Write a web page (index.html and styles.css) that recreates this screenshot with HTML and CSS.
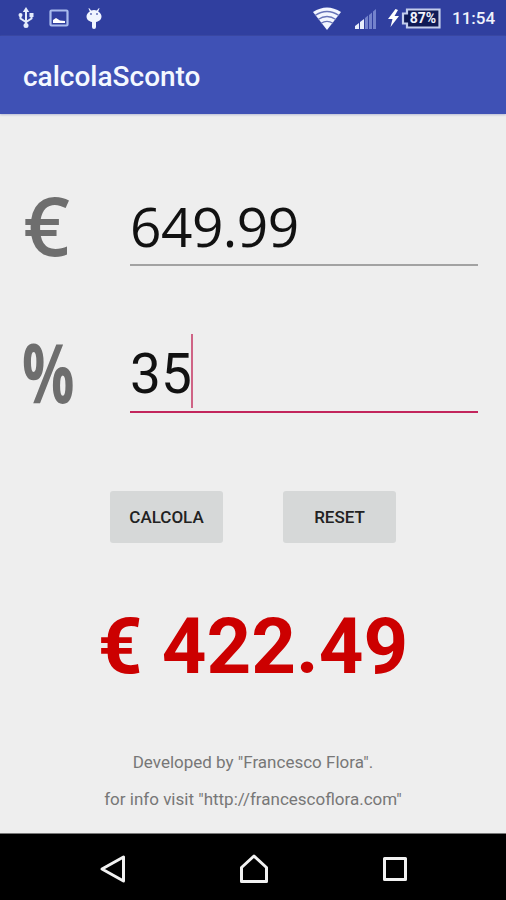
FILE: index.html
```
<!DOCTYPE html>
<html lang="it">
    <head>
        <meta charset="utf-8">
        <meta name="viewport" content="width=device-width, initial-scale=1.0">
        <title>calcolaSconto</title>
        <link rel="stylesheet" href="styles.css">
    </head>
    <body>
        <div class="statusbar">
            <svg class="usb" width="18" height="24" viewBox="0 0 18 24">
                <path d="M9 5v14M3.500 8.500v4l5.500 3.500 5.500-3.500v-4" />
                <path class="fill" d="M9 1l3.200 5H5.800zM12.500 7h4v4h-4z" />
                <circle cx="3.500" cy="9" r="2" />
                <circle cx="9" cy="19.500" r="2.500" />
            </svg>
            <svg class="picture" width="20" height="18" viewBox="0 0 20 18">
                <rect x="1.500" y="1.500" width="17" height="15" rx="1" />
                <path d="M4 14V11l3-2 4 2.500 5 .5v2z" />
            </svg>
            <svg class="robot" width="18" height="22" viewBox="0 0 18 22">
                <path d="M4 1l2.200 2.500a8 8 0 0 1 5.600 0L14 1l.5 .5-1.300 3c2 1.300 3.300 3 3.300 5 0 3-2.500 5-5.500 5.500v5a1.800 1.800 0 0 1-4 0V15c-3-.5-5.500-2.500-5.500-5.500 0-2 1.300-3.700 3.300-5l-1.300-3z" />
                <circle cx="6" cy="7" r=".9" />
                <circle cx="12" cy="7" r=".9" />
            </svg>
            <svg class="wifi" width="28" height="23" viewBox="0 0 28 23">
                <path class="fan" d="M0 5Q14-4 28 5L14 23z" />
                <path class="gap" d="M2 8.500q12-8 24 0M5 12.500q9-6 18 0M8 16.300q6-4 12 0" />
            </svg>
            <svg class="signal" width="22" height="21" viewBox="0 0 22 21">
                <path class="on" d="M0 21v-3l4-3v6zM5 21v-7l4-3v10z" />
                <path class="off" d="M10 21V10l3-2.500V21zM14 21V7l3-2.500V21zM18 21V3.500L21 1v20z" />
            </svg>
            <svg class="bolt" width="11" height="18" viewBox="0 0 11 18">
                <path d="M7.500 0L0 10h4.500L2.500 18 11 7H6.500L10 1z" />
            </svg>
            <div class="battery">
                <svg width="40" height="21" viewBox="0 0 40 21">
                    <path d="M6 1.500h32.500v18H6v-4H2v-10h4z" />
                </svg>
                <span>87%</span>
            </div>
            <span class="clock">11:54</span>
        </div>
        <div class="toolbar">
            <h1>calcolaSconto</h1>
        </div>
        <div class="container">
            <div class="row price">
                <span class="symbol euro">€</span>
                <div class="field amount">649.99</div>
            </div>
            <div class="row discount">
                <span class="symbol percent">%</span>
                <div class="field active">35<i class="caret"></i></div>
            </div>
            <div class="buttons">
                <button id="calcBtn">CALCOLA</button>
                <button id="resetBtn">RESET</button>
            </div>
            <div id="result">€ 422.49</div>
            <div class="info">
                <p>Developed by "Francesco Flora".</p>
                <p>for info visit "http://francescoflora.com"</p>
            </div>
        </div>
        <div class="navbar">
            <svg width="28" height="30" viewBox="0 0 28 30">
                <path d="M3 15L24.500 3v24z" />
            </svg>
            <svg width="32" height="30" viewBox="0 0 32 30">
                <path d="M3.500 27.500v-14L16 2l12.500 11.500v14z" />
            </svg>
            <svg width="28" height="30" viewBox="0 0 28 30">
                <path d="M3.500 4.500h21v21h-21z" />
            </svg>
        </div>
    </body>
</html>
```
FILE: styles.css
```
* {
    padding: 0;
    margin: 0;
    box-sizing: border-box;
}

body {
    display: flex;
    flex-direction: column;
    height: 900px;
    overflow: hidden;
    font-family: Roboto, sans-serif;
    background: #eeeeee;
}

svg {
    display: block;
    flex: none;
}

.statusbar {
    display: flex;
    align-items: center;
    height: 36px;
    padding-left: 17px;
    background: #303f9f;
    color: #f0f3fc;
}

.usb {
    fill: #e4ebfb;
}

.usb path {
    fill: none;
    stroke: #e4ebfb;
    stroke-width: 2;
}

.usb .fill {
    fill: #e4ebfb;
    stroke: none;
}

.picture {
    margin-left: 14px;
    fill: #fff;
}

.picture rect {
    fill: none;
    stroke: #a9bbed;
    stroke-width: 2.2;
}

.robot {
    margin-left: 16px;
    fill: #f0f5ff;
}

.robot circle {
    fill: #5262b4;
}

.wifi {
    margin-left: 210px;
}

.wifi .fan {
    fill: #f3f6ff;
}

.wifi .gap {
    fill: none;
    stroke: #6874b8;
    stroke-width: 1.3;
}

.signal {
    margin-left: 14px;
}

.signal .on {
    fill: #e8eefb;
}

.signal .off {
    fill: #7483cc;
}

.bolt {
    margin-left: 11px;
    fill: #fff;
}

.battery {
    position: relative;
    margin-left: 2px;
}

.battery path {
    fill: #101a55;
    stroke: #c3cdec;
    stroke-width: 2.2;
}

.battery span {
    position: absolute;
    left: 6px;
    top: 0;
    width: 32px;
    line-height: 21px;
    font-size: 14px;
    font-weight: 700;
    text-align: center;
}

.clock {
    margin-left: 11px;
    font-size: 17px;
    font-weight: 500;
}

.toolbar {
    display: flex;
    align-items: center;
    height: 78px;
    padding: 3px 23px 0;
    background: #3f51b5;
    box-shadow: 0 1px 2px #b8bcd4;
}

h1 {
    font-size: 28px;
    font-weight: 500;
    color: #f4f8ff;
}

.container {
    flex: 1;
}

.row {
    display: flex;
    padding: 0 28px 0 22px;
}

.price {
    margin-top: 66px;
}

.discount {
    margin-top: 47px;
}

.symbol {
    width: 108px;
    height: 100px;
    line-height: 88px;
    font-family: "Open Sans", sans-serif;
    font-size: 82px;
    font-weight: 600;
    color: #6e6e6e;
}

.euro {
    padding-left: 1px;
}

.percent {
    font-weight: 700;
    transform: scaleX(0.71);
    transform-origin: left;
}

.field {
    position: relative;
    flex: 1;
    height: 86px;
    line-height: 94px;
    font-size: 55px;
    color: #111;
    border-bottom: 2px solid #a2a2a2;
}

.amount {
    line-height: 92px;
    font-family: "Open Sans", sans-serif;
    letter-spacing: -0.5px;
}

.active {
    border-color: #c2255c;
}

.caret {
    position: absolute;
    left: 61px;
    top: 7px;
    width: 2px;
    height: 74px;
    background: #cf6385;
}

.buttons {
    display: flex;
    gap: 60px;
    margin: 64px 0 0 110px;
}

button {
    width: 113px;
    height: 52px;
    border: none;
    border-radius: 3px;
    background: #d6d8d8;
    font-family: Roboto, sans-serif;
    font-size: 17px;
    font-weight: 500;
    color: #222;
}

#result {
    margin-top: 58px;
    line-height: 92px;
    font-size: 78px;
    font-weight: 700;
    text-align: center;
    color: #cc0000;
}

.info {
    margin-top: 51px;
    font-size: 17px;
    line-height: 37px;
    text-align: center;
    color: #777;
}

.navbar {
    display: flex;
    align-items: center;
    height: 67px;
    padding: 3px 0 0 99px;
    gap: 111px;
    background: #000;
    border-top: 1px solid #777;
}

.navbar path {
    fill: none;
    stroke: #f2f2f2;
    stroke-width: 3;
    stroke-linejoin: round;
}
```
